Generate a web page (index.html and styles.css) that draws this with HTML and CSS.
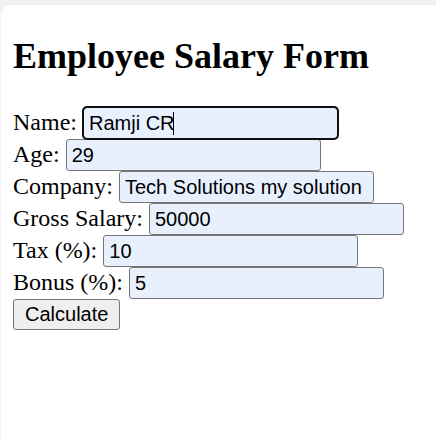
FILE: index.html
```html
<!DOCTYPE html>
<html>
<head>
<meta charset="utf-8">
<title>Employee Salary Form</title>
<link rel="stylesheet" href="styles.css">
</head>
<body>
<div class="page">
  <h1 class="title">Employee Salary Form</h1>
  <form class="form">
    <label class="label">Name:</label> <span class="field-wrap"><input class="field field-focus" type="text" value="Ramji CR"><span class="caret"></span></span><br>
    <label class="label">Age:</label> <input class="field" type="text" value="29"><br>
    <label class="label">Company:</label> <input class="field" type="text" value="Tech Solutions my solution"><br>
    <label class="label">Gross Salary:</label> <input class="field" type="text" value="50000"><br>
    <label class="label">Tax (%):</label> <input class="field" type="text" value="10"><br>
    <label class="label">Bonus (%):</label> <input class="field" type="text" value="5"><br>
    <button class="btn" type="button">Calculate</button>
  </form>
</div>
</body>
</html>
```
FILE: styles.css
```css
html, body {
  margin: 0;
  padding: 0;
  background: #f1f1f1;
  height: 100%;
}
body {
  padding: 5px 0 0 1px;
  box-sizing: border-box;
  overflow: hidden;
}
.page {
  display: flow-root;
  background: #ffffff;
  border-top-left-radius: 10px;
  height: 100%;
  padding: 0 12px;
  font-family: "Liberation Serif", "Times New Roman", serif;
  font-size: 24px;
  color: #000;
  box-sizing: border-box;
}
.title {
  font-size: 36px;
  font-weight: bold;
  margin: 30px 0 30px 0;
}
.form {
  margin: 0;
}
.label {
  font-family: "Liberation Serif", "Times New Roman", serif;
}
.field-wrap {
  position: relative;
  display: inline-block;
}
.field {
  font-family: "Liberation Sans", Arial, sans-serif;
  font-size: 20px;
  width: 255px;
  box-sizing: border-box;
  border: 1px solid #767676;
  border-radius: 3px;
  padding: 3.5px 5px;
  margin: 0;
  background: #e8f0fe;
  color: #000;
  outline: none;
}
.field-focus {
  outline: 2px solid #101010;
  outline-offset: -1px;
  border-radius: 4px;
}
.caret {
  position: absolute;
  left: 90px;
  top: 5px;
  width: 1px;
  height: 23px;
  background: #000;
}
.btn {
  font-family: "Liberation Sans", Arial, sans-serif;
  font-size: 20px;
  background: #efefef;
  border: 1px solid #767676;
  border-radius: 3px;
  padding: 3px 11px;
  margin: 0;
  color: #000;
}
```
